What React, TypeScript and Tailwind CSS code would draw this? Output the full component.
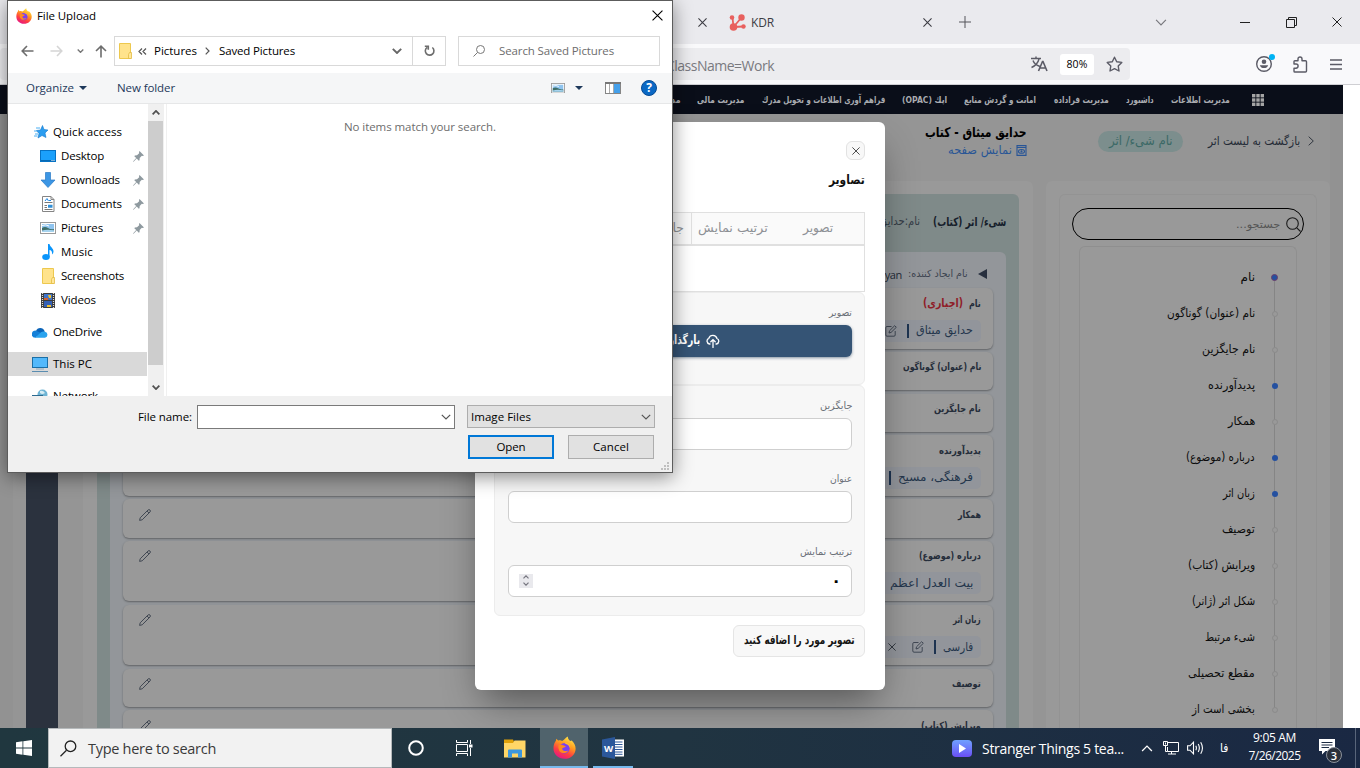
import { useLayoutEffect, useRef, useState } from "react";
import type { ReactNode } from "react";

type TextProps = { w: number; children: string; className?: string };

const FA = "font-['DejaVu_Sans',sans-serif]";
const UI = "font-['Open_Sans','Noto_Sans',sans-serif]";

function Fa({ w, children, className = "" }: TextProps) {
  const ref = useRef<HTMLSpanElement>(null);
  const [scale, setScale] = useState(1);

  useLayoutEffect(() => {
    if (ref.current) setScale(w / ref.current.offsetWidth);
  }, [w, children]);

  return (
    <span dir="rtl" className={`flex shrink-0 leading-none ${FA} ${className}`} style={{ width: w }}>
      <span
        ref={ref}
        className="inline-block shrink-0 origin-right whitespace-nowrap"
        style={{ transform: `scaleX(${scale})` }}
      >
        {children}
      </span>
    </span>
  );
}

// Latin text, spaced out evenly to its width
function En({ w, children, className = "" }: TextProps) {
  const ref = useRef<HTMLSpanElement>(null);
  const [spacing, setSpacing] = useState(0);

  useLayoutEffect(() => {
    if (ref.current) setSpacing((w - ref.current.getBoundingClientRect().width) / children.length);
  }, [w, children]);

  return (
    <span dir="ltr" className={`flex shrink-0 leading-none ${UI} ${className}`} style={{ width: w }}>
      <span ref={ref} className="inline-block shrink-0 whitespace-nowrap" style={{ letterSpacing: spacing }}>
        {children}
      </span>
    </span>
  );
}

function Firefox({ size }: { size: number }) {
  return (
    <svg width={size} height={size} viewBox="0 0 24 24" className="shrink-0">
      <defs>
        <linearGradient id={`ff${size}`} x1="0.8" y1="0" x2="0.3" y2="1">
          <stop offset="0" stopColor="#fff14f" />
          <stop offset="0.4" stopColor="#ff9a1f" />
          <stop offset="0.7" stopColor="#ff4040" />
          <stop offset="1" stopColor="#e31587" />
        </linearGradient>
      </defs>
      <path
        d="M15.5 0.4C15.2 3 17 4 18 5.2L19.5 4.8C22 7 23.6 10 23.6 13.2C23.6 19.3 18.4 23.8 12 23.8C5.500 23.800 .500 19 .500 12.800C.500 9.600 1.500 7 3 5L3.400 2.800L5.400 4.800C7.400 4.200 8.400 4.400 9.500 5.200C12 4 13 1.800 15.500 .400Z"
        fill={`url(#ff${size})`}
      />
      <circle cx="12" cy="12.800" r="5.400" fill="#7c3ff0" />
      <path d="M6 9.500C8 8.500 10.500 9.500 13.500 10.600C12.500 12 10.500 12 9.500 13C10 16 14 16.500 16 14.800C14.500 18.500 8.500 19 6.400 15C5.500 13 5.400 11 6 9.500Z" fill="#ff8a1e" />
      <path d="M12 7.500C15 6 18.500 9 18 13C17 9.500 15 8.800 12 7.500Z" fill="#ffbd2f" />
    </svg>
  );
}

function Cross({ size, className = "", sw = 1.2 }: { size: number; className?: string; sw?: number }) {
  return (
    <svg width={size} height={size} viewBox="0 0 10 10" fill="none" stroke="currentColor" strokeWidth={sw} className={className}>
      <path d="M0.5 0.5L9.5 9.5M9.5 0.5L0.5 9.5" />
    </svg>
  );
}

function Chevron({ className = "", sw = 1.5 }: { className?: string; sw?: number }) {
  return (
    <svg width="10" height="6" viewBox="0 0 10 6" fill="none" stroke="currentColor" strokeWidth={sw} className={className}>
      <path d="M0.800 0.800L5 5L9.200 0.800" />
    </svg>
  );
}

function EditIcon() {
  return (
    <svg width="12" height="12" viewBox="0 0 12 12" fill="none" stroke="#38404c" strokeWidth="0.9">
      <path d="M6.500 1.500H2A1.200 1.200 0 0 0 .800 2.700V10A1.200 1.200 0 0 0 2 11.200H9A1.200 1.200 0 0 0 10.200 10V6" />
      <path d="M4 8L4.500 5.800L9.700 .700L11.300 2.300L6.100 7.400Z" />
    </svg>
  );
}

function PencilIcon() {
  return (
    <svg width="12" height="12" viewBox="0 0 12 12" fill="none" stroke="#38404c" strokeWidth="0.9">
      <path d="M.600 11.400L1.200 8.800L9 1Q10 .200 11 1Q11.800 2 11 3L3.200 10.800ZM8 2L10 4" />
    </svg>
  );
}

function TabStrip() {
  return (
    <div className="flex h-11 items-center bg-[#eaeaee] pl-[698px] text-[#3c3c43]">
      <Cross size={9} />
      <svg width="17" height="17" viewBox="0 0 17 17" className="ml-[22px]">
        <g stroke="#e8605e" strokeWidth="1.800">
          <path d="M4.500 13L3.500 3.500M4.500 13L12.500 3.500M4.500 13L14.500 12.500" />
        </g>
        <g fill="#e8605e">
          <circle cx="3" cy="3.500" r="2.300" />
          <circle cx="12.500" cy="3.500" r="3.200" />
          <circle cx="4.500" cy="13" r="3.800" />
          <circle cx="14.500" cy="12.500" r="2.200" />
        </g>
      </svg>
      <En w={23} className="ml-[5px] pt-px text-[12px]">KDR</En>
      <Cross size={9} className="ml-[149px]" />
      <svg width="12" height="12" viewBox="0 0 12 12" stroke="#55555b" className="ml-[27px]">
        <path d="M6 0V12M0 6H12" />
      </svg>
      <Chevron className="ml-[184px] h-[7px] w-[12px] text-[#77777c]" sw={1} />
      <div className="ml-[73px] h-px w-[10px] bg-[#222]" />
      <svg width="11" height="11" viewBox="0 0 11 11" fill="none" stroke="#222" className="ml-[36px]">
        <path d="M.500 2.500H8.500V10.500H.500ZM2.500 2.500V.500H10.500V8.500H8.500" />
      </svg>
      <Cross size={10} className="ml-[35px] text-[#222]" sw={1} />
    </div>
  );
}

function UrlBar() {
  return (
    <div className="flex h-10 items-center bg-[#f9f9fb] text-[#5b5b66]">
      <div className="flex h-8 w-[1130px] shrink-0 items-center rounded-[4px] bg-[#ececef] pl-[666px]">
        <En w={108} className="pt-[3px] text-[14px] text-[#7a7a80]">ClassName=Work</En>
        <svg width="17" height="16" viewBox="0 0 17 16" fill="none" stroke="currentColor" strokeWidth="1.400" className="ml-[257px]">
          <path d="M0 2.500H10M5 .500V2.500M2 4.500C3 7.500 6 9.500 9 10.500M8 3C7 7 4 10 .500 11.500" />
          <path d="M7.500 15L11.500 5.500H12L16 15M9 12H14.500" strokeWidth="1.600" />
        </svg>
        <div className="ml-[12px] flex h-[21px] w-[34px] items-center justify-center rounded-[3px] bg-white pt-px text-black">
          <En w={21} className="text-[10.500px]">80%</En>
        </div>
        <svg width="17" height="17" viewBox="0 0 17 17" fill="none" stroke="currentColor" strokeWidth="1.400" strokeLinejoin="round" className="ml-[12px]">
          <path d="M8.500 1.200L10.700 5.700L15.800 6.400L12.200 9.900L13 15L8.500 12.700L4 15L4.800 9.900L1.200 6.400L6.300 5.700Z" />
        </svg>
      </div>
      <svg width="20" height="20" viewBox="0 0 20 20" className="mb-[3px] ml-[126px]">
        <circle cx="8" cy="11" r="7.300" fill="none" stroke="#5b5b66" strokeWidth="1.400" />
        <circle cx="8" cy="8.800" r="2.300" fill="#5b5b66" />
        <path d="M3.800 12.200H12.200A4.500 4.500 0 0 1 3.800 12.200Z" fill="#5b5b66" />
        <circle cx="16" cy="4" r="3" fill="#00b3f4" />
      </svg>
      <svg width="15" height="17" viewBox="0 0 15 17" fill="none" stroke="currentColor" strokeWidth="1.400" strokeLinejoin="round" className="ml-[17px]">
        <path d="M1 8V5.500Q1 4.700 1.800 4.700H5V3A2 2 0 0 1 9 3V4.700H12.500Q13.500 4.700 13.500 5.700V15Q13.500 16 12.500 16H1.800Q1 16 1 15.200V12.200H3A2 2 0 0 0 3 8Z" />
      </svg>
      <svg width="12" height="11" viewBox="0 0 12 11" stroke="currentColor" strokeWidth="1.400" className="ml-[22px]">
        <path d="M0 1H12M0 5.500H12M0 10H12" />
      </svg>
    </div>
  );
}

const nav = [
  { label: "مدیریت اطلاعات", w: 59 },
  { label: "داشبورد", w: 28 },
  { label: "مدیریت فراداده", w: 55 },
  { label: "امانت و گردش منابع", w: 72 },
  { label: "اپك (OPAC)", w: 45 },
  { label: "فراهم آوری اطلاعات و تحویل مدرك", w: 123 },
  { label: "مدیریت مالی", w: 47 },
  { label: "مدیریت", w: 28 },
];

function NavBar() {
  return (
    <div dir="rtl" className="flex h-[29px] items-center gap-[17.200px] bg-[#0a0e19] pr-[79px] text-[#a9abb0]">
      <svg width="12" height="12" viewBox="0 0 12 12" fill="#a5a5a5" className="ml-[5px]">
        {[0, 4.300, 8.600].map((y) =>
          [0, 4.300, 8.600].map((x) => <rect key={`${x}-${y}`} x={x} y={y} width="3.400" height="3.400" />),
        )}
      </svg>
      {nav.map((item) => (
        <Fa key={item.label} w={item.w} className="text-[9.500px] font-bold">{item.label}</Fa>
      ))}
    </div>
  );
}

const steps = [
  { label: "نام", w: 14, on: true },
  { label: "نام (عنوان) گوناگون", w: 88 },
  { label: "نام جایگزین", w: 53 },
  { label: "پدیدآورنده", w: 47, on: true },
  { label: "همکار", w: 27 },
  { label: "درباره (موضوع)", w: 69, on: true },
  { label: "زبان اثر", w: 32, on: true },
  { label: "توصیف", w: 33 },
  { label: "ویرایش (کتاب)", w: 67 },
  { label: "شکل اثر (ژانر)", w: 63 },
  { label: "شیء مرتبط", w: 50 },
  { label: "مقطع تحصیلی", w: 67 },
  { label: "بخشی است از", w: 63 },
];

function Steps() {
  return (
    <aside dir="rtl" className="mr-[13px] w-[284px] shrink-0 rounded-t-[6px] bg-[#999] px-[13px] pt-[13px]">
      <div className="h-full rounded-t-[6px] border border-b-0 border-[#939393] px-3 pt-[13px]">
        <div className="flex h-8 items-center rounded-full border border-black pr-[2px]">
          <svg width="15" height="15" viewBox="0 0 15 15" fill="none" stroke="#1a1a1a" strokeWidth="1.100">
            <circle cx="6.500" cy="6.500" r="5.800" />
            <path d="M10.800 10.800L14.500 14.500" />
          </svg>
          <Fa w={44} className="mr-[6px] text-[11px] text-[#555]">جستجو...</Fa>
        </div>
        <div className="mx-[7px] mt-[6px] h-[490px] rounded-t-[6px] border border-b-0 border-[#8f8f8f] pr-[18px] pt-3">
          {steps.map((step, i) => (
            <div key={step.label} className="relative flex h-9 items-center">
              {i < steps.length - 1 && <div className="absolute right-[3px] top-[19px] h-9 w-px bg-[#858585]" />}
              {step.on ? (
                <div className={i === 0 ? "relative mt-px size-[7px] rounded-full border border-[#6b3d6b] bg-[#2450a0]" : "relative mt-[2px] size-[6px] rounded-full bg-[#2450a0]"} />
              ) : (
                <div className="relative mt-[2px] size-[6px] rounded-full border border-[#8b8b8b] bg-[#999]" />
              )}
              <Fa w={step.w} className={i === 0 ? "mr-[16px] text-[12px] text-[#0c0c0c]" : "mr-[17px] text-[12px] text-[#0c0c0c]"}>{step.label}</Fa>
            </div>
          ))}
        </div>
      </div>
    </aside>
  );
}

type Value = { text: string; w: number; edit?: boolean; remove?: boolean; bar?: boolean };
type Field = { label: string; w: number; required?: boolean; value?: Value };

const fields: Field[] = [
  { label: "نام", w: 12, required: true, value: { text: "حدایق میثاق", w: 57, bar: true, edit: true } },
  { label: "نام (عنوان) گوناگون", w: 78 },
  { label: "نام جایگزین", w: 47 },
  { label: "پدیدآورنده", w: 42, value: { text: "فرهنگی، مسیح", w: 75, bar: true } },
  { label: "همکار", w: 23 },
  { label: "درباره (موضوع)", w: 62, value: { text: "بیت العدل اعظم", w: 84 } },
  { label: "زبان اثر", w: 28, value: { text: "فارسی", w: 30, bar: true, edit: true, remove: true } },
  { label: "توصیف", w: 29 },
  { label: "ویرایش (کتاب)", w: 60 },
];

function FieldCard({ field }: { field: Field }) {
  const { value } = field;
  return (
    <div
      className={`shrink-0 rounded-[6px] bg-[#999] px-3 pt-[7.500px] shadow-[0_1px_2px_rgba(0,0,0,0.35)] ${value ? "h-[60.500px]" : "h-[38.500px]"}`}
    >
      <div className="flex h-4 items-center">
        <Fa w={field.w} className="text-[10px] font-bold text-[#252d3a]">{field.label}</Fa>
        {field.required && <Fa w={40} className="mr-[6px] text-[11.500px] font-bold text-[#8f1d28]">(اجباری)</Fa>}
        <div className="mr-auto ml-[4px]">
          <PencilIcon />
        </div>
      </div>
      {value && (
        <div className="mt-[8px] flex h-[22px] w-[160px] items-center rounded-[5px] bg-[#92959b] pr-2">
          <Fa w={value.w} className="pb-px text-[12px] text-[#24364c]">{value.text}</Fa>
          {value.bar && <div className="mr-[7px] h-[14px] w-[2px] bg-[#1d3350]" />}
          {value.edit && <div className="mr-[10px]"><EditIcon /></div>}
          {value.remove && <Cross size={8} className="mr-[16px] text-[#30363f]" />}
        </div>
      )}
    </div>
  );
}

function WorkPanel() {
  return (
    <main dir="rtl" className="mr-[13px] w-[950px] shrink-0 rounded-t-[6px] bg-[#999] px-[14px] pt-[13px]">
      <div className="h-[540px] rounded-t-[6px] bg-[#7f8a89] px-[13px]">
        <div className="flex h-[58px] items-center pb-[2px]">
          <Fa w={73} className="text-[12px] font-bold text-[#16202b]">شیء/ اثر (کتاب)</Fa>
          <Fa w={66} className="mr-[13px] text-[11.500px] text-[#343c46]">نام:حدایق میثاق</Fa>
        </div>
        <div className="h-[482px] overflow-hidden rounded-t-[6px] bg-[#93969a] px-[13px]">
          <div className="flex h-9 items-center pt-[8px]">
            <svg width="9" height="10" viewBox="0 0 9 10" className="mr-[6px]">
              <path d="M9 0V10L0 5Z" fill="#272f3e" />
            </svg>
            <Fa w={60} className="mr-[10px] text-[10px] text-[#3b434f]">نام ایجاد کننده:</Fa>
            <En w={39} className="mr-[6px] text-[11px] text-[#242c38]">Abolyan</En>
          </div>
          <div className="flex flex-col gap-[3.300px]">
            {fields.map((field) => (
              <FieldCard key={field.label} field={field} />
            ))}
          </div>
        </div>
      </div>
    </main>
  );
}

function Page() {
  return (
    <div className="flex h-[614px] w-[1343px] flex-col bg-[#929292]">
      <div className="mx-[13px] flex-1 overflow-hidden bg-[#959595]">
        <div dir="rtl" className="flex h-[67px] pr-[16px] pt-[8px]">
          <div className="flex h-[38px] items-center">
            <svg width="6" height="10" viewBox="0 0 6 10" fill="none" stroke="#30363f">
              <path d="M.700 .700L5.300 5L.700 9.300" />
            </svg>
            <Fa w={92} className="mr-[8px] pb-px text-[12px] text-[#242b36]">بازگشت به لیست اثر</Fa>
            <div className="mr-[25px] flex h-[21px] w-[85px] items-center justify-center rounded-full bg-[#7c8e8d]">
              <Fa w={64} className="pb-px text-[13px] text-[#3b6966]">نام شیء/ اثر</Fa>
            </div>
          </div>
          <div className="mr-[71px] mt-[2px]">
            <Fa w={102} className="h-[17px] items-center text-[13.500px] font-bold text-black">حدایق میثاق - کتاب</Fa>
            <div className="flex h-[18px] items-center">
              <svg width="11" height="11" viewBox="0 0 11 11" fill="none" stroke="#285596" strokeWidth="1.100">
                <path d="M1 .600H10V10.400H1ZM1 2.500H10" />
                <ellipse cx="5.500" cy="6.400" rx="3" ry="1.900" />
                <circle cx="5.500" cy="6.400" r=".500" />
              </svg>
              <Fa w={64} className="mr-[4px] pb-px text-[12px] text-[#285596]">نمایش صفحه</Fa>
            </div>
          </div>
        </div>
        <div dir="rtl" className="flex h-[547px]">
          <div className="-mr-[13px] flex">
            <Steps />
            <WorkPanel />
          </div>
          <div className="mr-[25px] w-8 shrink-0 bg-[#2b323e]" />
        </div>
      </div>
    </div>
  );
}

function Input({ label, w, children }: { label: string; w: number; children?: ReactNode }) {
  return (
    <div className="h-[73.400px]">
      <Fa w={w} className="h-[13px] items-center text-[10px] text-[#6b7078]">{label}</Fa>
      <div className="mt-[6px] flex h-8 items-center justify-between rounded-[6px] border border-[#cfcfcf] bg-white px-[10px]">
        {children}
      </div>
    </div>
  );
}

function Modal() {
  return (
    <div dir="rtl" className="absolute left-[475px] top-[122px] flex h-[568px] w-[410px] flex-col rounded-[6px] bg-white px-5 pt-[19px] shadow-[0_18px_36px_-8px_rgba(0,0,0,0.45)]">
      <div className="flex size-[19px] items-center justify-center rounded-[6px] border border-[#e2e2e2] bg-[#f8f8f8]">
        <Cross size={8} className="text-[#222]" sw={1} />
      </div>
      <Fa w={36} className="mt-[10px] h-[18px] items-center text-[13px] font-bold text-[#111]">تصاویر</Fa>
      <div className="mt-[24px] -ml-px h-[80px] border border-[#e0e0e0]">
        <div className="flex h-[33px] border-b-2 border-[#e0e0e0] bg-[#fafafa] text-[#8e9196]">
          <div className="flex w-[89px] items-center justify-center pr-[2px]">
            <Fa w={30} className="text-[12.500px]">تصویر</Fa>
          </div>
          <div className="flex w-[84px] items-center justify-center border-l border-[#e0e0e0] pr-[2px]">
            <Fa w={70} className="text-[12.500px]">ترتیب نمایش</Fa>
          </div>
          <div className="flex items-center pr-[7px]">
            <Fa w={42} className="text-[12.500px]">جایگزین</Fa>
          </div>
        </div>
      </div>
      <div className="-ml-px h-[93px] rounded-[6px] border border-[#ececec] bg-[#f7f7f7] pl-[13px] pr-3 pt-[13px]">
        <Fa w={23} className="h-[13px] items-center text-[10px] text-[#6b7078]">تصویر</Fa>
        <div className="mt-[6px] flex h-8 items-center justify-center rounded-[6px] bg-[#355475] pb-[2px] pr-[4px] shadow-[0_1px_3px_rgba(20,50,80,0.5)]">
          <svg width="14" height="14" viewBox="0 0 14 14" fill="none" stroke="white" strokeWidth="1.300" strokeLinecap="round" className="mt-[2px]">
            <path d="M4 10H3.500A3 3 0 0 1 2.800 4.300A4.300 4.300 0 0 1 11 4.500A2.900 2.900 0 0 1 10.500 10H10M7 13.500V5.800M4.800 7.800L7 5.600L9.200 7.800" />
          </svg>
          <Fa w={64} className="mr-[5px] text-[12.500px] font-bold text-white">بارگذاری فایل</Fa>
        </div>
      </div>
      <div className="-ml-px h-[231px] rounded-[6px] border border-[#ececec] bg-[#f7f7f7] pl-[13px] pr-3 pt-[13px]">
        <Input label="جایگزین" w={32} />
        <Input label="عنوان" w={22} />
        <Input label="ترتیب نمایش" w={52}>
          <span className={`text-[16px] font-bold leading-none text-black ${FA}`}>۰</span>
          <div className="flex size-[14px] flex-col items-center justify-center gap-[3px] bg-[#e9e9ed] text-[#777780]">
            <Chevron className="h-[4px] w-[6px] rotate-180" sw={2} />
            <Chevron className="h-[4px] w-[6px]" sw={2} />
          </div>
        </Input>
      </div>
      <div className="mt-[9px] flex h-8 w-[132px] items-center justify-center rounded-[6px] border border-[#e5e5e5] bg-[#f8f8f8] pb-[2px]">
        <Fa w={111} className="text-[12px] font-bold text-[#151515]">تصویر مورد را اضافه کنید</Fa>
      </div>
    </div>
  );
}

function FolderIcon() {
  return (
    <svg width="13" height="16" viewBox="0 0 13 16">
      <path d="M.500 .500H11.500V15.500H.500Z" fill="#ffe38c" stroke="#edc84e" />
      <path d="M10.500 9.500H12.500V15.500H9.500V11.500Z" fill="#ffe79b" stroke="#e3bb42" strokeWidth=".800" />
    </svg>
  );
}

function PictureIcon({ size = 16 }: { size?: number }) {
  return (
    <svg width={size} height={size * 0.75} viewBox="0 0 16 12">
      <rect x=".500" y=".500" width="15" height="11" fill="#fff" stroke="#9a9a9a" />
      <rect x="2" y="2" width="12" height="8" fill="#8fc4ef" />
      <path d="M2 6Q5 4 8 6T14 7V10H2Z" fill="#3f6f6a" />
      <path d="M2 8.500Q7 7 14 8.300V10H2Z" fill="#a6d3ee" />
      <path d="M2 3.500Q6 2 9 4" stroke="#fff" fill="none" />
    </svg>
  );
}

const places = [
  {
    label: "Desktop", w: 43, pin: true,
    icon: (
      <svg width="16" height="12" viewBox="0 0 16 12">
        <rect x=".500" y=".500" width="15" height="11" fill="#1ba0fb" stroke="#0672c4" />
        <path d="M1 10.500H15" stroke="#0869b2" />
        <path d="M11.500 10.500H12.500M13.500 10.500H14.500" stroke="#fff" />
      </svg>
    ),
  },
  {
    label: "Downloads", w: 59, pin: true,
    icon: (
      <svg width="16" height="16" viewBox="0 0 16 16">
        <path d="M5.500 .500H10.500V8H15L8 15.500L1 8H5.500Z" fill="#3c96e4" stroke="#2a7ac6" strokeWidth=".700" />
      </svg>
    ),
  },
  {
    label: "Documents", w: 61, pin: true,
    icon: (
      <svg width="13" height="16" viewBox="0 0 13 16" fill="none">
        <path d="M.500 .500H9L12 3.500V15.500H.500Z" fill="#fff" stroke="#858585" />
        <path d="M9 .500V3.500H12" stroke="#858585" />
        <path d="M2.500 6.500H10.500M2.500 9.500H5M2.500 11.500H5M2.500 13.500H10.500" stroke="#777" />
        <path d="M3 5L5 2.500L6.500 5M7 4.500H9" stroke="#1e88e5" />
        <path d="M6 9.500H10.500M6 11H10.500" stroke="#2f8fd8" strokeWidth="1.500" />
      </svg>
    ),
  },
  { label: "Pictures", w: 42, pin: true, icon: <PictureIcon /> },
  {
    label: "Music", w: 32,
    icon: (
      <svg width="12" height="16" viewBox="0 0 12 16" fill="#0a95fb">
        <ellipse cx="4" cy="13" rx="3.800" ry="2.900" />
        <path d="M6 0H7.500C8 3 11.500 4 11.500 7.500Q11.500 9.500 10 10.500Q10.500 6.500 7.500 6V13H6Z" />
      </svg>
    ),
  },
  { label: "Screenshots", w: 63, icon: <FolderIcon /> },
  {
    label: "Videos", w: 35,
    icon: (
      <svg width="14" height="15" viewBox="0 0 14 15">
        <rect width="14" height="15" fill="#3b3b3b" />
        <path d="M1.500 0V15M12.500 0V15" stroke="#ddd" strokeWidth="1.200" strokeDasharray="1 1" />
        <rect x="3" y="1" width="8" height="6" fill="#3f73c9" />
        <rect x="3" y="8" width="8" height="6" fill="#3560b4" />
        <path d="M7 2H10V5H8ZM6 12H10V14H6Z" fill="#f0c22c" />
        <path d="M3 5H7V7H3Z" fill="#d7642c" />
      </svg>
    ),
  },
];

function Pin() {
  return (
    <svg width="11" height="11" viewBox="0 0 11 11" fill="#8e999f">
      <path d="M6.500 0L11 4.500L9.700 5L8.800 4.800L6.700 7L6.500 9.200L5.800 9.700L3.700 7.600L.600 10.800L0 10.400L3.200 7L1.300 5.200L1.900 4.500L4 4.300L6.200 2.200L6 1Z" />
    </svg>
  );
}

function DialogSidebar() {
  return (
    <div className="h-[292px] w-[139px] shrink-0 overflow-hidden pt-4 text-[11.500px] text-black">
      <div className="flex h-6 items-center pl-[26px]">
        <svg width="15" height="14" viewBox="0 0 15 14">
          <path d="M8.500 .500L10 4.500L14 5L11 8L12 12.500L8 10.500L4 13L5 8.500L2.500 5.500L6.500 5Z" fill="#2a9df0" stroke="#1679cc" strokeWidth=".600" />
          <path d="M2 3H6M0 6H3M1 9H4M0 11H3.500" stroke="#4aaef2" />
        </svg>
        <En w={69} className="ml-[4px]">Quick access</En>
      </div>
      {places.map((place) => (
        <div key={place.label} className="flex h-6 items-center">
          <div className="ml-8 flex w-4 justify-center">{place.icon}</div>
          <En w={place.w} className="ml-[5px]">{place.label}</En>
          {place.pin && <div className="ml-auto mr-[3px]"><Pin /></div>}
        </div>
      ))}
      <div className="mt-2 flex h-6 items-center pl-6">
        <svg width="16" height="11" viewBox="0 0 16 11">
          <path d="M4 4A4.500 4.500 0 0 1 12.500 4L13 9H3Z" fill="#0a63b8" />
          <path d="M3.500 3.500A3.600 3.600 0 0 0 3.500 10.700L9 6Z" fill="#1480d8" />
          <path d="M3 10.700L9 5.200A4.500 4.500 0 0 1 13 4.800A3 3 0 0 1 13 10.700Z" fill="#2aa3ee" />
        </svg>
        <En w={49} className="ml-[5px]">OneDrive</En>
      </div>
      <div className="mt-2 flex h-6 items-center bg-[#d9d9d9] pl-6">
        <svg width="16" height="15" viewBox="0 0 16 15">
          <rect x=".500" y=".500" width="15" height="10" fill="#53b9fb" stroke="#1b6fa6" />
          <path d="M4 12H12" stroke="#8faabc" />
          <path d="M0 14.500H16" stroke="#5b8db0" />
        </svg>
        <En w={39} className="ml-[5px]">This PC</En>
      </div>
      <div className="mt-2 flex h-6 items-center pl-6">
        <svg width="16" height="15" viewBox="0 0 16 15">
          <circle cx="10.500" cy="5.500" r="5" fill="#6fb4d4" />
          <path d="M8 2Q11 1 13 4Q10 6 8 4Z" fill="#d5ecf4" />
          <rect x=".500" y="6.500" width="10" height="7" fill="#3aa0e0" stroke="#2c6a90" />
        </svg>
        <En w={45} className="ml-[5px]">Network</En>
      </div>
    </div>
  );
}

function FileDialog() {
  return (
    <div className={`absolute left-[7px] top-0 flex h-[473px] w-[666px] flex-col border border-[#5c5c5c] bg-white shadow-[0_4px_18px_rgba(0,0,0,0.45)] ${UI}`}>
      <div className="flex h-[30px] items-center pb-px pl-2 pr-[9px]">
        <Firefox size={16} />
        <En w={59} className="ml-[5px] text-[11.500px] text-black">File Upload</En>
        <Cross size={11} className="ml-auto text-black" sw={1} />
      </div>
      <div className="mt-[5px] flex h-[30px] items-center">
        <svg width="13" height="12" viewBox="0 0 13 12" fill="none" stroke="#6d6d6d" strokeWidth="1.600" className="ml-[13px]">
          <path d="M6 1L1.200 6L6 11M1 6H12.500" />
        </svg>
        <svg width="13" height="12" viewBox="0 0 13 12" fill="none" stroke="#d5d5d5" strokeWidth="1.600" className="ml-[16px]">
          <path d="M7 1L11.800 6L7 11M12 6H.500" />
        </svg>
        <Chevron className="ml-[14px] h-[4px] w-[7px] text-[#777]" sw={2} />
        <svg width="12" height="13" viewBox="0 0 12 13" fill="none" stroke="#6d6d6d" strokeWidth="1.600" className="ml-[11px]">
          <path d="M1 6L6 1.200L11 6M6 1V12.500" />
        </svg>
        <div className="ml-[7px] flex h-[30px] w-[332px] items-center border border-[#d9d9d9] text-[11.500px] text-black">
          <div className="ml-[4px]"><FolderIcon /></div>
          <svg width="9" height="7" viewBox="0 0 9 7" fill="none" stroke="#555" strokeWidth="1.200" className="ml-[6px]">
            <path d="M4 .500L1 3.500L4 6.500M8 .500L5 3.500L8 6.500" />
          </svg>
          <En w={43} className="ml-[7px]">Pictures</En>
          <svg width="5" height="8" viewBox="0 0 5 8" fill="none" stroke="#555" strokeWidth="1.200" className="ml-[8px]">
            <path d="M.700 .700L4 4L.700 7.300" />
          </svg>
          <En w={76} className="ml-[9px]">Saved Pictures</En>
          <Chevron className="ml-auto mr-[10px] text-[#666]" sw={1.900} />
          <div className="flex h-full w-[33px] items-center justify-center border-l border-[#d9d9d9]">
            <svg width="11" height="12" viewBox="0 0 11 12" fill="none" stroke="#6d6d6d" strokeWidth="1.600">
              <path d="M8.300 2.500A4.300 4.300 0 1 1 3.200 2.300M.800 1.200H4.300V4.800" />
            </svg>
          </div>
        </div>
        <div className="ml-[12px] flex h-[30px] w-[202px] items-center border border-[#d9d9d9]">
          <svg width="12" height="12" viewBox="0 0 12 12" fill="none" stroke="#777" className="ml-[14px]">
            <circle cx="7.500" cy="4.500" r="4" />
            <path d="M4.500 7.500L.500 11.500" />
          </svg>
          <En w={115} className="ml-[14px] text-[11.500px] text-[#6d6d6d]">Search Saved Pictures</En>
        </div>
      </div>
      <div className="mt-[7px] flex h-[31px] items-center border-b border-[#e6e7e8] bg-[#f5f6f7] text-[11.500px] text-[#1e395b]">
        <En w={48} className="ml-[18px]">Organize</En>
        <svg width="8" height="4" viewBox="0 0 8 4" className="ml-[5px]"><path d="M0 0H8L4 4Z" fill="#1e395b" /></svg>
        <En w={58} className="ml-[30px]">New folder</En>
        <div className="ml-auto flex items-center pr-[15px]">
          <PictureIcon size={14} />
          <svg width="8" height="4" viewBox="0 0 8 4" className="ml-[10px]"><path d="M0 0H8L4 4Z" fill="#1e395b" /></svg>
          <svg width="16" height="12" viewBox="0 0 16 12" className="ml-[22px]">
            <rect x=".500" y=".500" width="15" height="11" fill="#fff" stroke="#858585" />
            <path d="M0 1H16" stroke="#777" strokeWidth="2" />
            <path d="M4.500 2V11M8.500 2V11" stroke="#aaa" />
            <rect x="9" y="2" width="6" height="9" fill="#45a0ea" />
          </svg>
          <div className="ml-[20px] flex size-4 items-center justify-center rounded-full border border-[#064a94] bg-[#0a68c4] text-[12px] font-bold leading-none text-white">?</div>
        </div>
      </div>
      <div className="flex h-[292px]">
        <DialogSidebar />
        <div className="ml-px flex w-4 flex-col items-center bg-[#f0f0f0] text-[#505050]">
          <div className="flex h-[17px] items-center"><Chevron className="h-[5px] w-[8px] rotate-180" sw={2.200} /></div>
          <div className="h-[244px] w-[15px] self-start bg-[#cdcdcd]" />
          <div className="mt-auto flex h-[17px] items-center"><Chevron className="h-[5px] w-[8px]" sw={2.200} /></div>
        </div>
        <div className="ml-[2px] flex flex-1 justify-center border-l border-[#f0f0f0] pl-px pt-[17px]">
          <En w={152} className="h-3 items-center text-[11.500px] text-[#6d6d6d]">No items match your search.</En>
        </div>
      </div>
      <div className="relative flex flex-1 gap-3 bg-[#f0f0f0] pt-[9px] text-[11.500px] text-black">
        <div className="flex h-6">
          <En w={54} className="ml-[130px] h-full items-center">File name:</En>
          <div className="ml-[5px] flex h-6 w-[258px] items-center justify-end border border-[#7a7a7a] bg-white pr-[3px]">
            <Chevron className="text-[#555]" sw={1.200} />
          </div>
        </div>
        <div>
          <div className="flex h-[23px] w-[188px] items-center justify-between border border-[#adadad] bg-[#e1e1e1] pl-[3px] pr-[3px]">
            <En w={60}>Image Files</En>
            <Chevron className="text-[#555]" sw={1.200} />
          </div>
          <div className="mt-[7px] flex gap-[14px] pl-px">
            <div className="flex h-6 w-[86px] items-center justify-center border-2 border-[#0078d7] bg-[#e1e1e1]"><En w={29}>Open</En></div>
            <div className="flex h-6 w-[86px] items-center justify-center border border-[#adadad] bg-[#e1e1e1]"><En w={36}>Cancel</En></div>
          </div>
        </div>
        <svg width="8" height="8" viewBox="0 0 8 8" fill="#bfbfbf" className="absolute bottom-[2px] right-[3px]">
          <path d="M6 0H8V2H6ZM3 3H5V5H3ZM6 3H8V5H6ZM0 6H2V8H0ZM3 6H5V8H3ZM6 6H8V8H6Z" />
        </svg>
      </div>
    </div>
  );
}

function Taskbar() {
  return (
    <div className="relative flex h-10 items-center bg-linear-to-r from-[#20373f] via-[#203441] to-[#1a2843] text-white">
      <div className="flex w-12 justify-center">
        <svg width="16" height="16" viewBox="0 0 16 16" fill="#fff">
          <path d="M0 2.200L6.500 1.300V7.600H0ZM7.300 1.200L16 0V7.600H7.300ZM0 8.400H6.500V14.700L0 13.800ZM7.300 8.400H16V16L7.300 14.800Z" />
        </svg>
      </div>
      <div className="flex h-10 w-[344px] items-center border border-[#b5b9bb] bg-[#f2f2f2] pl-[11px]">
        <svg width="17" height="17" viewBox="0 0 17 17" fill="none" stroke="#222" strokeWidth="1.300">
          <circle cx="10.500" cy="6.300" r="5.300" />
          <path d="M6.500 10.300L.500 16.300" />
        </svg>
        <En w={128} className="ml-[11px] pt-[2px] text-[14.500px] text-[#3a3a3a]">Type here to search</En>
      </div>
      <svg width="16" height="16" viewBox="0 0 16 16" fill="none" stroke="#fff" strokeWidth="2" className="ml-4">
        <circle cx="8" cy="8" r="6.800" />
      </svg>
      <svg width="17" height="16" viewBox="0 0 17 16" fill="none" stroke="#fff" className="ml-[32px]">
        <path d="M.500 0V2.500H11.500V0M.500 16V13.500H11.500V16M.500 4.500H11.500V11.500H.500ZM14.500 0V4M14.500 8V16" />
        <path d="M13 6H16.500" strokeWidth="3" />
      </svg>
      <svg width="22" height="19" viewBox="0 0 22 19" className="ml-[31px]">
        <path d="M0 .500H9L10 2.500V6H0Z" fill="#e0a10a" />
        <path d="M0 4H9L10.500 1.500H21.500V18.500H0Z" fill="#ffd667" />
        <path d="M4 18.500V11.500Q4 10.500 5 10.500H17Q18 10.500 18 11.500V18.500H14V14.500H8V18.500Z" fill="#3d97dd" />
      </svg>
      <div className="ml-[14px] flex h-10 w-12 items-center justify-center border-b-2 border-[#76b9ed] bg-[#50636c]">
        <Firefox size={23} />
      </div>
      <div className="ml-[5px] flex h-10 w-10 items-center justify-center border-b-2 border-[#76b9ed] pt-px">
        <svg width="22" height="22" viewBox="0 0 22 22">
          <rect x="12" y="2.500" width="10" height="17" fill="#fff" />
          <path d="M13 5H20.500M13 7.500H20.500M13 10H20.500M13 12.500H20.500M13 15H20.500M13 17.300H20.500" stroke="#2b579a" />
          <path d="M0 2.500L13 0V22L0 19.500Z" fill="#2b579a" />
          <text x="6.500" y="14.800" textAnchor="middle" fontSize="9.500" fontWeight="700" fontFamily="Open Sans" fill="#fff">W</text>
        </svg>
      </div>
      <div className="ml-auto flex items-center">
        <div className="flex h-[17px] w-5 items-center justify-center rounded-[4px] bg-linear-to-b from-[#6fa0ff] to-[#6a4cf4]">
          <svg width="7" height="9" viewBox="0 0 7 9" fill="#fff"><path d="M0 0L7 4.500L0 9Z" /></svg>
        </div>
        <En w={142} className="ml-[10px] pt-[2px] text-[14px]">Stranger Things 5 tea...</En>
        <Chevron className="ml-[17px] h-[7px] w-[12px] rotate-180" sw={1.100} />
        <svg width="17" height="14" viewBox="0 0 17 14" fill="none" stroke="#fff" className="ml-[10px]">
          <path d="M5 1.500H15.500V10.500H4.500V6M8.500 10.500V13M5 13H13M.500 .500H4.500V4.500H.500ZM2.500 4.500V10.500H4.500M2.500 1.500V3.500" />
        </svg>
        <svg width="17" height="14" viewBox="0 0 17 14" fill="none" stroke="#fff" strokeWidth="1.100" className="ml-[7px]">
          <path d="M.600 4.800H3L6.500 1.200V12.800L3 9.200H.600ZM8.800 4.800Q10 7 8.800 9.200M11.200 3Q13.500 7 11.200 11M13.700 1.200Q17.200 7 13.700 12.800" />
        </svg>
        <Fa w={8} className="ml-[16px] text-[12px]">فا</Fa>
        <div className="ml-[20px] flex w-[53px] flex-col items-center gap-[6px] pb-[2px]">
          <En w={43} className="text-[12px]">9:05 AM</En>
          <En w={52} className="text-[12px]">7/26/2025</En>
        </div>
        <div className="relative ml-[18px] h-6 w-6">
          <svg width="16" height="16" viewBox="0 0 16 16" className="mt-[3px]">
            <path d="M0 0H16V12H6.500L3 15.500V12H0Z" fill="#fff" />
            <path d="M2.500 3.500H13.500M2.500 6H13.500M2.500 8.500H10" stroke="#1c2b42" />
          </svg>
          <div className={`absolute -bottom-[3px] left-[7px] flex size-4 items-center justify-center rounded-full border border-[#8b919b] bg-[#2a303b] text-[11px] font-semibold leading-none ${UI}`}>3</div>
        </div>
        <div className="ml-[12px] mr-[4px] h-10 w-px bg-[#59657a]" />
      </div>
    </div>
  );
}

export default function App() {
  return (
    <div className="relative flex h-[768px] w-[1360px] flex-col overflow-hidden bg-white">
      <TabStrip />
      <UrlBar />
      <div className="h-px bg-[#cfcfd3]" />
      <div className="w-[1343px]">
        <NavBar />
      </div>
      <Page />
      <Modal />
      <FileDialog />
      <div className="relative">
        <Taskbar />
      </div>
    </div>
  );
}
